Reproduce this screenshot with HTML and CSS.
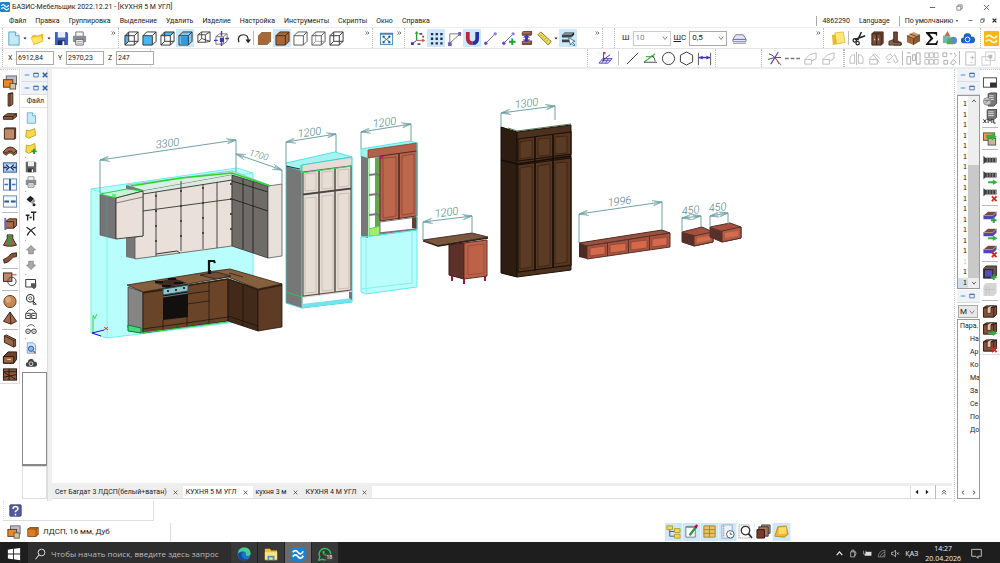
FILE: index.html
```html
<!DOCTYPE html>
<html lang="ru">
<head>
<meta charset="utf-8">
<title>БАЗИС-Мебельщик 2022.12.21 - [КУХНЯ 5 М УГЛ]</title>
<link rel="stylesheet" href="styles.css">
</head>
<body>
<svg class="defs" aria-hidden="true">
<symbol id="logo" viewBox="0 0 16 16"><rect width="16" height="16" rx="2" fill="#1683d8"/><path d="M2 6q3-4 6 0t6-1M2 11q3-4 6 0t6-1" fill="none" stroke="#fff" stroke-width="2"/></symbol>
<symbol id="new" viewBox="0 0 16 16"><path d="M3 1h7l4 4v10H3z" fill="#c4eafa" stroke="#5ba3c2"/><path d="M10 1v4h4" fill="#fff" stroke="#5ba3c2"/></symbol>
<symbol id="open" viewBox="0 0 16 16"><path d="M2 5l4-1 1 1 7-2v8l-10 4z" fill="#e6b923"/><path d="M1 7l11-2 2 6-10 3z" fill="#ffe564" stroke="#dcb32c" stroke-width=".6"/></symbol>
<symbol id="save" viewBox="0 0 16 16"><path d="M1 1h13l1 2v12H1z" fill="#3b62c4"/><path d="M4 1h8v6H4z" fill="#e9eefb"/><path d="M4 10h8v5H4z" fill="#1d2f66"/><path d="M9 11h2v4H9z" fill="#fff"/></symbol>
<symbol id="saveg" viewBox="0 0 16 16"><path d="M1 1h13l1 2v12H1z" fill="#666"/><path d="M4 1h8v6H4z" fill="#eee"/><path d="M4 10h8v5H4z" fill="#333"/><path d="M9 11h2v4H9z" fill="#fff"/></symbol>
<symbol id="print" viewBox="0 0 16 16"><path d="M4 1h8v5H4z" fill="#f5f5f5" stroke="#777"/><rect x="1" y="5" width="14" height="7" rx="1" fill="#888e94"/><path d="M4 9h8v6H4z" fill="#fff" stroke="#666"/><path d="M5 11h6M5 13h6" stroke="#999"/></symbol>
<symbol id="wire" viewBox="0 0 16 16"><path d="M1 5h10v10H1zM5 1h10v10H5zM1 5l4-4M11 5l4-4M1 15l4-4M11 15l4-4" fill="none" stroke="#333"/></symbol>
<symbol id="cleft" viewBox="0 0 16 16"><path d="M1 5l4-4v10l-4 4z" fill="#48b6f2"/><use href="#wire"/></symbol>
<symbol id="cfront" viewBox="0 0 16 16"><path d="M1 5h10v10H1z" fill="#48b6f2"/><path d="M1 5h10v10H1zM5 1h10v10M1 5l4-4M11 5l4-4M11 15l4-4" fill="none" stroke="#333"/></symbol>
<symbol id="ctop" viewBox="0 0 16 16"><path d="M1 5l4-4h10l-4 4z" fill="#48b6f2"/><use href="#wire"/></symbol>
<symbol id="call" viewBox="0 0 16 16"><path d="M1 5l4-4h10v10l-4 4H1z" fill="#79c8f7"/><path d="M3 6h8v8H3z" fill="#2e9be6"/><path d="M1 5h10v10H1zM5 1h10v10M1 5l4-4M11 5l4-4M11 15l4-4" fill="none" stroke="#333"/></symbol>
<symbol id="cpersp" viewBox="0 0 16 16"><path d="M2 4h8v8H2zM6 1h9v10l-5 1M2 4l4-3M10 4l5-3M6 1v7l-4 4M6 8l9 3" fill="none" stroke="#444"/></symbol>
<symbol id="ccen" viewBox="0 0 16 16"><path d="M2 6h8v8H2zM6 3h8v8M2 6l4-3M10 6l4-3M10 14l4-3" fill="none" stroke="#777"/><path d="M8 0v5M8 12v4M0 10h4M12 8h4M7 8h3v3H7z" stroke="#4038b8" fill="#4038b8" stroke-width="1.500"/></symbol>
<symbol id="rot" viewBox="0 0 16 16"><path d="M3 12q-2-8 5-8 5 0 5 6" fill="none" stroke="#222" stroke-width="1.300"/><path d="M10 9h6l-3 4z" fill="#222"/></symbol>
<symbol id="flat" viewBox="0 0 16 16"><path d="M1 5l4-4h10v10l-4 4H1z" fill="#a4693b"/></symbol>
<symbol id="wood" viewBox="0 0 16 16"><path d="M1 5l4-4h10v10l-4 4H1z" fill="#a4693b" stroke="#4a2c14"/><path d="M1 5h10v10M11 5l4-4" fill="none" stroke="#4a2c14"/></symbol>
<symbol id="hollow" viewBox="0 0 16 16"><path d="M1 5l4-4h10v10l-4 4H1zM1 5h10v10M11 5l4-4" fill="#fff" stroke="#555"/></symbol>
<symbol id="hid" viewBox="0 0 16 16"><path d="M5 1v10h10M5 11l-4 4" fill="none" stroke="#aaa"/><path d="M1 5l4-4h10v10l-4 4H1zM1 5h10v10M11 5l4-4" fill="none" stroke="#555"/></symbol>
<symbol id="fit" viewBox="0 0 16 16"><rect x="1.500" y="2.500" width="13" height="12" fill="#edf6fc" stroke="#4b84b4"/><path d="M1 3h14" stroke="#4b84b4" stroke-width="2"/><path d="M4 6l8 6M12 6l-8 6" stroke="#3b74b0"/><path d="M4 6h2M10 6h2M4 12h2M10 12h2" stroke="#234b80" stroke-width="2"/></symbol>
<symbol id="axes" viewBox="0 0 16 16"><path d="M6 10V2" stroke="#2ba33a" stroke-width="1.500"/><path d="M4 3l2-3 2 3z" fill="#2ba33a"/><path d="M6 10l-5 4" stroke="#343fb5"/><path d="M6 10h8" stroke="#d14b3f"/><path d="M0 12h3v3H0z" fill="#343fb5"/><path d="M12 8l3 2-3 2z" fill="#d14b3f"/><path d="M9 3h3M7 14h3M13 5v2" stroke="#555" stroke-width="2"/></symbol>
<symbol id="dots" viewBox="0 0 16 16"><path d="M2 2h2.500v2.500H2zM7 2h2.500v2.500H7zM12 2h2.500v2.500H12zM2 7h2.500v2.500H2zM7 7h2.500v2.500H7zM12 7h2.500v2.500H12zM2 12h2.500v2.500H2zM7 12h2.500v2.500H7zM12 12h2.500v2.500H12z" fill="#22304a"/></symbol>
<symbol id="poly" viewBox="0 0 16 16"><path d="M3 14V3h11L3 13" fill="none" stroke="#777"/><path d="M1 12h4v4H1zM12 1h3v4h-3z" fill="#6b62bd"/></symbol>
<symbol id="mag" viewBox="0 0 16 16"><path d="M8 13q-5 0-5-5V1" fill="none" stroke="#b9253c" stroke-width="4"/><path d="M8 13q5 0 5-5V1" fill="none" stroke="#2530a0" stroke-width="4"/></symbol>
<symbol id="seg" viewBox="0 0 16 16"><path d="M3 13L13 3" stroke="#6a60c4"/><circle cx="3" cy="13" r="1.800" fill="#5b52bc"/><circle cx="13" cy="3" r="1.800" fill="#8c7fe0"/></symbol>
<symbol id="segp" viewBox="0 0 16 16"><use href="#seg"/><path d="M12 8v7M8.500 11.500h7" stroke="#1f9d3b" stroke-width="2"/></symbol>
<symbol id="pipes" viewBox="0 0 16 16"><path d="M3 1l2-1h9v4l-1 1H3zM3 11l2-1h9v4l-1 1H3z" fill="#7a4a39"/><path d="M4 2h8M4 12h8" stroke="#c28a75"/><path d="M8 4l4 3H9.500v2H12l-4 3-4-3h2.500V7H4z" fill="#3a31c2"/></symbol>
<symbol id="ruler" viewBox="0 0 16 16"><path d="M1 4l3-3 11 10-3 4z" fill="#f0d85a" stroke="#8a7a2c"/><path d="M5 4l-1 1M7 6L6 7M9 8L8 9M11 10l-1 1" stroke="#8a7a2c"/></symbol>
<symbol id="pick" viewBox="0 0 16 16"><path d="M1 4l3-3h10l-3 3z" fill="#7c8b91"/><path d="M1 4h10v3H1zM1 9h9v3H1z" fill="#3b454a"/><path d="M11 4l3-3v3l-3 3z" fill="#222"/><path d="M8 7l7 4-3 1 3 3-1 1-3-3-1 2z" fill="#fff" stroke="#4275a2"/></symbol>
<symbol id="stack" viewBox="0 0 16 16"><path d="M4 4h8l3 5H1z" fill="#e4e4f4" stroke="#7477a5"/><path d="M1 9h14v2H1zM1 13h14" fill="none" stroke="#7477a5"/></symbol>
<symbol id="notes" viewBox="0 0 16 16"><path d="M1 4h8l2 9-9 2z" fill="#e5bc2e"/><path d="M4 2l9-1 2 11-9 2z" fill="#ffe873" stroke="#cfab30" stroke-width=".7"/></symbol>
<symbol id="cut" viewBox="0 0 16 16"><path d="M10 1L6 10M3 9l11-4" stroke="#222" stroke-width="1.600"/><circle cx="3" cy="10" r="1.800" fill="none" stroke="#222" stroke-width="1.300"/><circle cx="6" cy="13" r="1.800" fill="none" stroke="#222" stroke-width="1.300"/></symbol>
<symbol id="cab" viewBox="0 0 16 16"><path d="M2 3l2-2h10v12l-2 2H2z" fill="#7a4e38" stroke="#3a2218"/><path d="M2 3h10v12M7 3v12" fill="none" stroke="#3a2218"/><path d="M5 8v2M9 8v2" stroke="#f2d4ae"/></symbol>
<symbol id="corner" viewBox="0 0 16 16"><path d="M6 1h4v9l4 3v2H6z" fill="#6b4a38" stroke="#2c1c14" stroke-width=".8"/><path d="M1 11l5-2v3h8v3H1z" fill="#8d6348" stroke="#2c1c14" stroke-width=".8"/></symbol>
<symbol id="box" viewBox="0 0 16 16"><path d="M1 5l7-4 7 3-7 4z" fill="#cf9a6b"/><path d="M1 5l7 3v7l-7-3z" fill="#a46a3c"/><path d="M8 8l7-4v7l-7 4z" fill="#8a5630"/><path d="M1 5l7 3v7M8 8l7-4M4 3l7 3" fill="none" stroke="#4a2c14" stroke-width=".8"/></symbol>
<symbol id="sum" viewBox="0 0 16 16"><path d="M2 1h12v4h-1q0-2-3-2H6l4 5-5 5h6q2 0 3-3h1l-1 5H2v-1l5-6-5-6z" fill="#111"/></symbol>
<symbol id="shapes" viewBox="0 0 16 16"><path d="M6 0l3 6H2z" fill="#d75b4a"/><rect x="1" y="5" width="8" height="8" fill="#71b7ab"/><circle cx="12" cy="10" r="4" fill="#5d86cc"/><path d="M6 8h4l2 6H5z" fill="#55a957"/></symbol>
<symbol id="cloud" viewBox="0 0 16 16"><path d="M4 13a3 3 0 0 1 0-6 4 4 0 0 1 8-1 3.500 3.500 0 0 1 1 7z" fill="#1b63cc"/><circle cx="8" cy="9" r="2.500" fill="none" stroke="#fff"/></symbol>
<symbol id="yel" viewBox="0 0 16 16"><rect width="16" height="16" rx="1" fill="#f7b719"/><path d="M2 7q3-4 6-1t6-1M2 11q3-3 6 0t6-1" fill="none" stroke="#fff4cc" stroke-width="1.800"/></symbol>
<symbol id="plane" viewBox="0 0 16 16"><path d="M1 13l4-5h10l-4 5zM4 10h10M7 8l-3 5M11 8l-3 5" fill="#e5e0ff" stroke="#6153b5"/><path d="M6 11V1M6 9l7-5" stroke="#3b3190"/><path d="M5 1h3v3z" fill="#c33"/></symbol>
<symbol id="line" viewBox="0 0 16 16"><path d="M2 14L14 2" stroke="#333"/></symbol>
<symbol id="ang" viewBox="0 0 16 16"><path d="M1 12L13 3M3 6h9" stroke="#4eae4e" stroke-width="1.200"/><path d="M1 12h14M9 5q4 2 4 6" fill="none" stroke="#444"/></symbol>
<symbol id="circ" viewBox="0 0 16 16"><circle cx="8" cy="8" r="6.500" fill="none" stroke="#333"/></symbol>
<symbol id="hex" viewBox="0 0 16 16"><path d="M8 1l6.500 3.500v7L8 15l-6.500-3.500v-7z" fill="none" stroke="#333"/></symbol>
<symbol id="dim" viewBox="0 0 16 16"><path d="M1.500 2v13M14.500 2v13" stroke="#555"/><path d="M2 7h12" stroke="#3c33c4" stroke-width="1.500"/><path d="M2 7l4-2v4zM14 7l-4-2v4z" fill="#3c33c4"/></symbol>
<symbol id="trim" viewBox="0 0 16 16"><path d="M1 9q7-3 14-2M2 3q7 2 11 11" fill="none" stroke="#444"/><path d="M12 1L4 14" stroke="#4b41c7" stroke-width="1.200"/><path d="M9 8l6 7" stroke="#d54747"/></symbol>
<symbol id="dash" viewBox="0 0 16 16"><path d="M0 8h4M6 8h4M12 8h4" stroke="#777" stroke-width="1.500"/></symbol>
<symbol id="ext" viewBox="0 0 16 16"><path d="M2 9h7v5H2zM7 4l7-2v6l-5 3M2 9l5-5" fill="none" stroke="#bbb"/></symbol>
<symbol id="mir" viewBox="0 0 16 16"><path d="M8 1v14M6 4q-5 0-5 5v4h5zM10 4q5 0 5 5v4h-5z" fill="none" stroke="#bbb"/></symbol>
<symbol id="roof" viewBox="0 0 16 16"><path d="M2 9l6-6 6 5M3 9h8v5H3zM6 3l7 9" fill="none" stroke="#bbb"/></symbol>
<symbol id="tilt" viewBox="0 0 16 16"><path d="M1 7l4-4 3 3-4 4zM8 6q3-4 4 1M11 6l3 5-3 2-2-4M2 12h4" fill="none" stroke="#bbb"/></symbol>
<symbol id="arr" viewBox="0 0 16 16"><path d="M1 6h4v8H1zM7 4h3v6H7zM11 2h4v12h-4zM1 2h4" fill="none" stroke="#aaa"/></symbol>
<symbol id="cop" viewBox="0 0 16 16"><path d="M1 2h4v4H1zM2 10h4v4H2zM8 3h3M13 2l2 3-2 2M9 13l3-4 3 3-3 3z" fill="none" stroke="#aaa"/></symbol>
<symbol id="six" viewBox="0 0 16 16"><path d="M1 2h4v5H1zM6 2h4v5H6zM11 2h4v5h-4zM1 9h4v5H1zM6 9h4v5H6zM11 9h4v5h-4z" fill="none" stroke="#bbb"/></symbol>
<symbol id="doc2" viewBox="0 0 16 16"><path d="M3 1h10v14H3zM8 7h4M10 5v4M8 12h2" fill="none" stroke="#bbb"/></symbol>
<symbol id="doc3" viewBox="0 0 16 16"><path d="M5 1h10v9H5zM1 6h9v9H1z" fill="none" stroke="#ccc"/><path d="M8 4h4v4H8z" fill="#bbb"/></symbol>
<symbol id="mat" viewBox="0 0 16 16"><rect x="4" y="1" width="11" height="9" fill="#b9bed3" stroke="#666"/><rect x="1" y="5" width="10" height="8" fill="#ec8727" stroke="#59361c"/><rect x="8" y="9" width="6" height="6" fill="#d5c398" stroke="#555"/></symbol>
<symbol id="vert" viewBox="0 0 16 16"><path d="M6 2l3-1h2v12l-3 2H6z" fill="#9c6446" stroke="#3a2218"/><path d="M6 2h2v13M8 2l3-1" fill="none" stroke="#3a2218"/></symbol>
<symbol id="horz" viewBox="0 0 16 16"><path d="M1 8l4-3h10v3l-4 3H1z" fill="#8f5b40" stroke="#3a2218"/><path d="M1 8h10v3M11 8l4-3" fill="none" stroke="#3a2218"/></symbol>
<symbol id="panel" viewBox="0 0 16 16"><path d="M2 3l1-1h11v11l-1 1H2z" fill="#bf8b6d" stroke="#3a2218"/><path d="M2 3h11v11" fill="none" stroke="#3a2218"/></symbol>
<symbol id="arc" viewBox="0 0 16 16"><path d="M1 9q7-9 14-1v3l-3 2q-4-5-8 0l-3-2z" fill="#a16a4c" stroke="#3a2218"/><path d="M1 9l3 2q4-5 8 0l3-3" fill="none" stroke="#3a2218"/></symbol>
<symbol id="hx" viewBox="0 0 16 16"><rect x="1" y="3" width="14" height="10" fill="#9ec3ee" stroke="#3d5f94"/><rect x="3" y="5" width="10" height="6" fill="#dbe9f9"/><path d="M1 8h4M11 8h4M4 5l3 3-3 3M12 5L9 8l3 3" fill="none" stroke="#1c3c70" stroke-width="1.500"/></symbol>
<symbol id="hv" viewBox="0 0 16 16"><rect x="1" y="2" width="14" height="12" fill="#f2f7fc" stroke="#6388b3"/><path d="M8 2v12" stroke="#2856a0" stroke-width="2"/><path d="M2 8h4M10 8h4" stroke="#3977c5" stroke-width="1.500"/></symbol>
<symbol id="hh" viewBox="0 0 16 16"><rect x="1" y="2" width="14" height="12" fill="#f2f7fc" stroke="#6388b3"/><path d="M2 8h5M9 8h5" stroke="#2856a0" stroke-width="2"/></symbol>
<symbol id="edge" viewBox="0 0 16 16"><path d="M3 6l4-3h8v7l-3 3H3z" fill="#a86d4b" stroke="#3a2218"/><path d="M3 6h9v7" fill="none" stroke="#3a2218"/><path d="M3 2v13" stroke="#5d6cc9" stroke-width="2"/></symbol>
<symbol id="bell" viewBox="0 0 16 16"><path d="M5 2h6v4l4 7-5 1H5l-4-1 4-7z" fill="#9c6446" stroke="#3a2218"/><path d="M6 2h4v10l-2 2-2-2z" fill="#4d8c45"/></symbol>
<symbol id="wave" viewBox="0 0 16 16"><path d="M1 10q4-1 6-4t8-3v4q-4 0-6 3t-7 4z" fill="#885337" stroke="#3a2218"/></symbol>
<symbol id="sc" viewBox="0 0 16 16"><rect x="1" y="1" width="9" height="9" fill="#bc8b6e" stroke="#3a2218"/><circle cx="10" cy="10" r="4.500" fill="none" stroke="#444"/><path d="M10 3h5" stroke="#d23"/></symbol>
<symbol id="ball" viewBox="0 0 16 16"><circle cx="8" cy="8" r="6.500" fill="#c48755" stroke="#5c3a24"/><circle cx="6" cy="6" r="3" fill="#dba877"/></symbol>
<symbol id="pyr" viewBox="0 0 16 16"><path d="M8 1l7 10-6 3-8-3z" fill="#a3694a" stroke="#3a2218"/><path d="M8 1l1 13" stroke="#3a2218"/></symbol>
<symbol id="door" viewBox="0 0 16 16"><path d="M2 3l2-1 10 5v7l-2 1L2 10z" fill="#98674a" stroke="#3a2218"/><path d="M2 3l10 5v7M12 8l2-1" fill="none" stroke="#3a2218"/></symbol>
<symbol id="drawer" viewBox="0 0 16 16"><path d="M1 7l5-5h9v8l-3 4H1z" fill="#6e422c" stroke="#2a1810"/><path d="M1 7h11v7H1z" fill="#9b6647" stroke="#2a1810"/><path d="M5 10h4" stroke="#f6ddbb"/></symbol>
<symbol id="frame" viewBox="0 0 16 16"><rect x="1" y="2" width="14" height="12" fill="#8d583d" stroke="#2a1810"/><path d="M1 5h14M1 11l14-3M7 2v12M2 6l12 7" stroke="#2a1810"/></symbol>
<symbol id="fold" viewBox="0 0 16 16"><path d="M2 4l4 1 7-3 1 9-9 4-4-2z" fill="#f8da41" stroke="#b39121"/></symbol>
<symbol id="foldp" viewBox="0 0 16 16"><use href="#fold"/><path d="M12 9v7M8.500 12.500h7" stroke="#219b35" stroke-width="2.400"/></symbol>
<symbol id="erase" viewBox="0 0 16 16"><path d="M2 6l5-5 5 4-5 5z" fill="#222"/><path d="M7 10l5-5 2 3-4 4z" fill="#999"/><circle cx="12" cy="13" r="2" fill="#222"/></symbol>
<symbol id="text" viewBox="0 0 16 16"><path d="M1 7h5M3.500 7v7M8 3h7M11.500 3v11M6 10h3" stroke="#222" stroke-width="1.800"/></symbol>
<symbol id="del" viewBox="0 0 16 16"><path d="M2 3q6 3 12 11M14 3Q6 7 3 14" fill="none" stroke="#222" stroke-width="1.600"/></symbol>
<symbol id="up" viewBox="0 0 16 16"><path d="M8 2l6 6h-3v5H5V8H2z" fill="#aaa" stroke="#777"/></symbol>
<symbol id="down" viewBox="0 0 16 16"><path d="M8 14l6-6h-3V3H5v5H2z" fill="#aaa" stroke="#777"/></symbol>
<symbol id="zr" viewBox="0 0 16 16"><path d="M1 2h13v10H1z" fill="none" stroke="#333" stroke-width="1.300"/><path d="M8 7h7v5l-3 3-4-4z" fill="#555"/></symbol>
<symbol id="zo" viewBox="0 0 16 16"><circle cx="7" cy="7" r="5" fill="none" stroke="#333" stroke-width="1.500"/><circle cx="7" cy="7" r="2" fill="none" stroke="#333"/><path d="M11 10v5M11 15h4M11 11l4 4" stroke="#333" stroke-width="1.300"/></symbol>
<symbol id="two" viewBox="0 0 16 16"><path d="M2 6q6-8 12 0M1 7h6v7H1zM9 7h6v7H9zM3 10h3M10 10h3" fill="none" stroke="#333" stroke-width="1.300"/></symbol>
<symbol id="gla" viewBox="0 0 16 16"><path d="M3 5q5-6 10 0" fill="none" stroke="#333"/><circle cx="4" cy="11" r="3" fill="none" stroke="#333" stroke-width="1.300"/><circle cx="12" cy="11" r="3" fill="none" stroke="#333" stroke-width="1.300"/><path d="M3 11h2M11 11h2M7 10h2" stroke="#333"/></symbol>
<symbol id="find" viewBox="0 0 16 16"><path d="M3 1h8l3 3v11H3z" fill="#cfe3fa" stroke="#6b94cb"/><circle cx="8" cy="9" r="3.500" fill="#8ab8ee" stroke="#2f60a8" stroke-width="1.300"/><path d="M11 12l3 3" stroke="#c55" stroke-width="2"/></symbol>
<symbol id="cg" viewBox="0 0 16 16"><path d="M4 13a3 3 0 0 1 0-6 4 4 0 0 1 8-1 3.500 3.500 0 0 1 1 7z" fill="#444"/><circle cx="8" cy="9" r="2.500" fill="none" stroke="#fff"/></symbol>
<symbol id="sheet" viewBox="0 0 16 16"><rect x="1" y="3" width="14" height="10" fill="#fff" stroke="#444"/><path d="M8 8h7v5H8z" fill="#333"/></symbol>
<symbol id="srv" viewBox="0 0 16 16"><path d="M6 2l3-1h6v11l-3 3H6z" fill="#777" stroke="#444"/><path d="M7 4h5M7 6h5M7 8h5" stroke="#ddd"/><circle cx="5" cy="10" r="4" fill="#c5cbd0" stroke="#888"/><path d="M2 9h6M3 12l4-4" stroke="#777"/></symbol>
<symbol id="xml" viewBox="0 0 16 16"><path d="M5 1l3-1h7v9l-3 2H5z" fill="#777" stroke="#444"/><path d="M6 3h6M6 5h6M6 7h6" stroke="#ddd"/><path d="M1 11l3 4M4 11l-3 4M6 15v-4l2 2 2-2v4M12 11v4h2" fill="none" stroke="#222"/></symbol>
<symbol id="ga" viewBox="0 0 16 16"><rect x="1" y="2" width="12" height="8" fill="#ec9d4c" stroke="#555"/><rect x="6" y="8" width="8" height="7" fill="#c8b592" stroke="#555"/><path d="M4 4h6V2l5 4-5 4V8H4z" fill="#2fb43f"/></symbol>
<symbol id="screw" viewBox="0 0 16 16"><path d="M1 3l2 2h12v5H3l-2 2z" fill="#3c3c3c"/><path d="M5 4v7M8 4v7M11 4v7M14 4v7" stroke="#aaa" stroke-width=".8"/></symbol>
<symbol id="ar" viewBox="0 0 16 16"><path d="M6 12h5v-2l5 3-5 3v-2H6z" fill="#2fb43f"/></symbol>
<symbol id="rx" viewBox="0 0 16 16"><path d="M10 10l5 5M15 10l-5 5" stroke="#d22a2a" stroke-width="2"/></symbol>
<symbol id="screwa" viewBox="0 0 16 16"><use href="#screw" y="-2"/><use href="#ar"/></symbol>
<symbol id="screwx" viewBox="0 0 16 16"><use href="#screw" y="-2"/><use href="#rx"/></symbol>
<symbol id="lay" viewBox="0 0 16 16"><path d="M1 7l5-4h9l-4 4z" fill="#6c5145"/><path d="M1 7h10l4-4v4l-4 4H1z" fill="#4b45b9"/><path d="M1 7h10l4-4" fill="none" stroke="#c98d6f"/></symbol>
<symbol id="layp" viewBox="0 0 16 16"><use href="#lay"/><path d="M12 9v6M9 12h6" stroke="#2fa43f" stroke-width="2"/></symbol>
<symbol id="laya" viewBox="0 0 16 16"><use href="#lay"/><use href="#ar"/></symbol>
<symbol id="layx" viewBox="0 0 16 16"><use href="#lay"/><use href="#rx"/></symbol>
<symbol id="blk" viewBox="0 0 16 16"><path d="M1 4l3-3h11v10l-3 3H1z" fill="#6c5145" stroke="#333"/><path d="M2 5h9v8H2z" fill="#544cc8" stroke="#222"/><path d="M12 10v6M9 13h6" stroke="#2fa43f" stroke-width="2"/></symbol>
<symbol id="gr" viewBox="0 0 16 16"><path d="M1 4l3-3h11v11l-3 3H1z" fill="#d5d5d5"/><path d="M4 5v8M7 5v8M1 8h12" stroke="#c2c2c2"/></symbol>
<symbol id="slot" viewBox="0 0 16 16"><path d="M1 4l3-2h11v9l-3 3H1z" fill="#81513c" stroke="#2a1810"/><path d="M5 4l3-2h4L9 4v6H5z" fill="#e2c4ad" stroke="#2a1810" stroke-width=".7"/><path d="M1 4h4M9 4h3v10M12 4l3-2" fill="none" stroke="#2a1810"/></symbol>
<symbol id="slota" viewBox="0 0 16 16"><use href="#slot"/><use href="#ar"/></symbol>
<symbol id="slotx" viewBox="0 0 16 16"><use href="#slot"/><use href="#rx"/></symbol>
<symbol id="oak" viewBox="0 0 16 16"><path d="M1 4l3-2h11v9l-3 3H1z" fill="#e07d23" stroke="#6e3a11"/><path d="M1 4h11v10M12 4l3-2" fill="none" stroke="#6e3a11"/></symbol>
<symbol id="tree" viewBox="0 0 16 16"><path d="M4 5v8h6M4 8h6" fill="none" stroke="#555"/><path d="M1 2h6v4H1zM9 5h6v4H9zM9 11h6v4H9z" fill="#f6da4b" stroke="#b89722"/></symbol>
<symbol id="edit" viewBox="0 0 16 16"><path d="M2 3h10v11H2z" fill="#fff" stroke="#777"/><path d="M2 3h10" stroke="#888" stroke-width="2"/><path d="M6 12l7-9" stroke="#369640" stroke-width="2.500"/><path d="M12 4l2-3" stroke="#c04" stroke-width="2.500"/></symbol>
<symbol id="cells" viewBox="0 0 16 16"><path d="M2 2h12v12H2z" fill="#e9c560" stroke="#a98232"/><path d="M2 6h12M2 10h12M8 2v12" stroke="#a98232"/></symbol>
<symbol id="clock" viewBox="0 0 16 16"><path d="M2 1h11v14H2z" fill="#eef4fb" stroke="#9ab"/><path d="M4 2v12" stroke="#567" stroke-dasharray="1 1"/><circle cx="11" cy="11" r="4" fill="#fff" stroke="#456"/><path d="M11 9v2h2" fill="none" stroke="#456"/></symbol>
<symbol id="look" viewBox="0 0 16 16"><path d="M1 1h11v14H1z" fill="#f8f8f8" stroke="#888" stroke-dasharray="1 1"/><circle cx="8" cy="7" r="4.500" fill="#fff" stroke="#333" stroke-width="1.400"/><path d="M11 10l4 5" stroke="#333" stroke-width="1.800"/></symbol>
<symbol id="sets" viewBox="0 0 16 16"><path d="M6 1h9v9H6z" fill="#9b9080" stroke="#444"/><path d="M3 3h10v10H3z" fill="#ae7557" stroke="#333"/><path d="M1 6h8v9H1z" fill="#743c2b" stroke="#311"/></symbol>
<symbol id="gold" viewBox="0 0 16 16"><path d="M4 3l9-1 2 9-4 3-10-1z" fill="#f0b72d" stroke="#c68b14"/><path d="M5 4l8-1v7l-8 1z" fill="#ffda67"/></symbol>
<symbol id="ques" viewBox="0 0 16 16"><rect x="1" y="1" width="14" height="14" rx="1" fill="#555a9c" stroke="#373b70"/><path d="M5 6q0-3 3-3t3 3q0 1-3 3v1M8 12v2" fill="none" stroke="#fff" stroke-width="1.800"/></symbol>
<symbol id="win" viewBox="0 0 16 16"><path d="M1 3l6-1v5.500H1zM8 2l7-1v6.500H8zM1 8.500h6V14l-6-1zM8 8.500h7V15l-7-1z" fill="#fff"/></symbol>
<symbol id="mgl" viewBox="0 0 16 16"><circle cx="10" cy="6" r="4.500" fill="none" stroke="#ddd" stroke-width="1.300"/><path d="M7 9l-5 6" stroke="#ddd" stroke-width="1.400"/></symbol>
<symbol id="edgeb" viewBox="0 0 16 16"><circle cx="8" cy="8" r="7.500" fill="#1c74c9"/><path d="M1 7q1-6.500 7.500-6.500T15.500 7q0 3-3.500 3-2 0-2-1 1-1 0-3-4-3-9 1z" fill="#46cf8e"/><path d="M5 8q0 6 7 6-3 2.500-7 1-4-2-4-7 3-3 7-2-3 0-3 2z" fill="#144a9e"/></symbol>
<symbol id="expl" viewBox="0 0 16 16"><path d="M1 2h6l1 2h7v11H1z" fill="#f2be3a"/><path d="M1 6h14v8H1z" fill="#fde388"/><path d="M4 10h8v5h-2v-3H6v3H4z" fill="#3f93d3"/></symbol>
<symbol id="wa" viewBox="0 0 16 16"><path d="M1 15l1-4A6.500 6.500 0 1 1 5 14z" fill="none" stroke="#2fc060" stroke-width="1.600"/><path d="M5 5q0 4 5 6l1-2-2-1-1 1-1-2 1-1-1-2z" fill="#2fc060"/></symbol>
<symbol id="t1" viewBox="0 0 16 16"><path d="M3 5h7v9H3zM5 5V2h4v3M11 4q3 3 0 8" fill="none" stroke="#ddd" stroke-width="1.200"/></symbol>
<symbol id="t2" viewBox="0 0 16 16"><path d="M3 5h12v7H3z" fill="#ddd"/><path d="M1 3v6h4V3" fill="#222" stroke="#ddd"/></symbol>
<symbol id="t3" viewBox="0 0 16 16"><path d="M2 14Q3 3 14 2v12zM6 14q0-6 8-8M10 14q0-3 4-4" fill="none" stroke="#999" stroke-width="1.200"/></symbol>
<symbol id="t4" viewBox="0 0 16 16"><path d="M1 6h3l4-4v12l-4-4H1zM10 6l4 4M14 6l-4 4" fill="none" stroke="#ddd" stroke-width="1.200"/></symbol>
<symbol id="t5" viewBox="0 0 16 16"><path d="M1 2h14v10h-5v3l-3-3H1z" fill="none" stroke="#ddd" stroke-width="1.200"/></symbol>
<symbol id="min" viewBox="0 0 16 16"><path d="M2 8h12" stroke="currentColor" stroke-width="2"/></symbol>
<symbol id="max" viewBox="0 0 16 16"><path d="M2 3h12v10H2zM2 4h12" fill="none" stroke="currentColor" stroke-width="2"/></symbol>
<symbol id="res" viewBox="0 0 16 16"><path d="M2 5h9v9H2zM5 5V2h9v9h-3" fill="none" stroke="currentColor" stroke-width="1.500"/></symbol>
<symbol id="x" viewBox="0 0 16 16"><path d="M2 2l12 12M14 2L2 14" stroke="currentColor" stroke-width="2"/></symbol>
<symbol id="xb" viewBox="0 0 16 16"><path d="M2 2l12 12M14 2L2 14" stroke="currentColor" stroke-width="4"/></symbol>
<symbol id="chd" viewBox="0 0 16 16"><path d="M3 5l5 6 5-6" fill="none" stroke="currentColor" stroke-width="2"/></symbol>
<symbol id="chu" viewBox="0 0 16 16"><path d="M3 11l5-6 5 6" fill="none" stroke="currentColor" stroke-width="2"/></symbol>
<symbol id="chl" viewBox="0 0 16 16"><path d="M11 3L5 8l6 5" fill="none" stroke="currentColor" stroke-width="2"/></symbol>
<symbol id="chr" viewBox="0 0 16 16"><path d="M5 3l6 5-6 5" fill="none" stroke="currentColor" stroke-width="2"/></symbol>
<symbol id="tl" viewBox="0 0 16 16"><path d="M11 2v12L4 8z" fill="#111"/></symbol>
<symbol id="tr" viewBox="0 0 16 16"><path d="M5 2v12l7-6z" fill="#111"/></symbol>
<symbol id="dbu" viewBox="0 0 16 16"><path d="M3 8l5-5 5 5M3 14l5-5 5 5" fill="none" stroke="#222" stroke-width="2"/></symbol>
<symbol id="td" viewBox="0 0 16 16"><path d="M3 5h10l-5 6z" fill="#222"/></symbol>
<symbol id="more" viewBox="0 0 16 16"><path d="M2 3l5 5-5 5M8 3l5 5-5 5" fill="none" stroke="#222" stroke-width="2"/></symbol>
</svg>

<div class="app">
<header class="title">
  <svg class="i9"><use href="#logo"/></svg><h1>БАЗИС-Мебельщик 2022.12.21 - [КУХНЯ 5 М УГЛ]</h1>
  <div class="winbtns"><button aria-label="Свернуть"><svg class="i7"><use href="#min"/></svg></button><button aria-label="Восстановить"><svg class="i7"><use href="#res"/></svg></button><button aria-label="Закрыть"><svg class="i7"><use href="#x"/></svg></button></div>
</header>
<nav class="menu">
  <button>Файл</button><button>Правка</button><button>Группировка</button><button>Выделение</button><button>Удалить</button><button>Изделие</button><button>Настройка</button><button>Инструменты</button><button>Скрипты</button><button>Окно</button><button>Справка</button>
  <div class="menuright"><span class="bar">4862290</span><button>Language</button><button class="bar">По умолчанию <svg class="i5"><use href="#td"/></svg></button><button class="mdi" aria-label="Свернуть окно"><svg class="i6"><use href="#min"/></svg></button><button class="mdi" aria-label="Восстановить окно"><svg class="i6"><use href="#res"/></svg></button><button class="mdi" aria-label="Закрыть окно"><svg class="i6"><use href="#xb"/></svg></button></div>
</nav>

<div class="tools">
  <div class="g g1"><button aria-label="Новый"><svg><use href="#new"/></svg></button><svg class="caret"><use href="#td"/></svg><button aria-label="Открыть"><svg><use href="#open"/></svg></button><svg class="caret"><use href="#td"/></svg><button aria-label="Сохранить"><svg><use href="#save"/></svg></button><button aria-label="Печать"><svg><use href="#print"/></svg></button><svg class="more"><use href="#more"/></svg></div>
  <div class="g g2"><button aria-label="Слева"><svg><use href="#cleft"/></svg></button><button aria-label="Спереди"><svg><use href="#cfront"/></svg></button><button aria-label="Сверху"><svg><use href="#ctop"/></svg></button><button class="on" aria-label="Аксонометрия"><svg><use href="#call"/></svg></button><button aria-label="Перспектива"><svg><use href="#cpersp"/></svg></button><button aria-label="Центр"><svg><use href="#ccen"/></svg></button><i class="gap"></i><button aria-label="Повернуть"><svg><use href="#rot"/></svg></button><i class="sep"></i><button aria-label="Заливка"><svg><use href="#flat"/></svg></button><button class="on" aria-label="Текстура"><svg><use href="#wood"/></svg></button><button aria-label="Без линий"><svg><use href="#hollow"/></svg></button><button aria-label="Невидимые"><svg><use href="#hid"/></svg></button><button aria-label="Каркас"><svg><use href="#wire"/></svg></button><svg class="more"><use href="#more"/></svg></div>
  <div class="g g3"><button aria-label="Показать всё"><svg><use href="#fit"/></svg></button><svg class="more"><use href="#more"/></svg></div>
  <div class="g g4"><button aria-label="Оси"><svg><use href="#axes"/></svg></button><button class="on" aria-label="Сетка"><svg><use href="#dots"/></svg></button><button aria-label="Полилиния"><svg><use href="#poly"/></svg></button><button class="on" aria-label="Привязка"><svg><use href="#mag"/></svg></button><button aria-label="Отрезок"><svg><use href="#seg"/></svg></button><button aria-label="Добавить точку"><svg><use href="#segp"/></svg></button><button aria-label="Расстояние"><svg><use href="#pipes"/></svg></button><button aria-label="Линейка"><svg><use href="#ruler"/></svg></button><svg class="caret"><use href="#td"/></svg><button class="on" aria-label="Выбор"><svg><use href="#pick"/></svg></button><svg class="more"><use href="#more"/></svg></div>
  <div class="g g5"></div>
  <div class="g g6"><label for="w">Ш</label><select id="w" disabled><option>10</option></select><label for="ws"><u>Ш</u>С</label><select id="ws"><option>0,5</option></select><button aria-label="Слои"><svg><use href="#stack"/></svg></button><svg class="more"><use href="#more"/></svg></div>
  <div class="g g7"><button aria-label="Заметки"><svg><use href="#notes"/></svg></button><i class="sep"></i><button aria-label="Раскрой"><svg><use href="#cut"/></svg></button><button aria-label="Шкаф"><svg><use href="#cab"/></svg></button><button aria-label="Уголок"><svg><use href="#corner"/></svg></button><button aria-label="Упаковка"><svg><use href="#box"/></svg></button><button aria-label="Смета"><svg><use href="#sum"/></svg></button><button aria-label="Фигуры"><svg><use href="#shapes"/></svg></button><button aria-label="Облако"><svg><use href="#cloud"/></svg></button></div>
  <div class="g"><button aria-label="Базис"><svg><use href="#yel"/></svg></button></div>
</div>
<div class="tools second">
  <div class="g coords"><label for="cx">X</label><input id="cx" value="6912,84"><label for="cy">Y</label><input id="cy" value="2970,23"><label for="cz">Z</label><input id="cz" value="247"></div>
  <div class="g h1"></div>
  <div class="g h2"><button aria-label="Плоскость"><svg><use href="#plane"/></svg></button><i class="sep"></i><button aria-label="Линия"><svg><use href="#line"/></svg></button><button aria-label="Угол"><svg><use href="#ang"/></svg></button><button aria-label="Окружность"><svg><use href="#circ"/></svg></button><button aria-label="Многоугольник"><svg><use href="#hex"/></svg></button><button aria-label="Размер"><svg><use href="#dim"/></svg></button></div>
  <div class="g h3"></div>
  <div class="g h4"><button aria-label="Обрезать"><svg><use href="#trim"/></svg></button><button aria-label="Пунктир"><svg><use href="#dash"/></svg></button><button aria-label="Вытянуть"><svg><use href="#ext"/></svg></button><button aria-label="Сдвинуть"><svg><use href="#ext"/></svg></button></div>
  <div class="g h5"><button aria-label="Симметрия"><svg><use href="#mir"/></svg></button><button aria-label="Поворот"><svg><use href="#roof"/></svg></button><button aria-label="Наклон"><svg><use href="#tilt"/></svg></button><i class="sep"></i><button aria-label="Выровнять"><svg><use href="#arr"/></svg></button><button aria-label="Массив"><svg><use href="#six"/></svg></button><button aria-label="Копии"><svg><use href="#cop"/></svg></button><i class="sep"></i><button aria-label="Лист"><svg><use href="#doc2"/></svg></button><button aria-label="Листы"><svg><use href="#doc3"/></svg></button></div>
</div>

<main class="main">
  <div class="vt"><svg><use href="#mat"/></svg><svg><use href="#vert"/></svg><svg><use href="#horz"/></svg><svg><use href="#panel"/></svg><svg><use href="#arc"/></svg><svg><use href="#hx"/></svg><svg><use href="#hv"/></svg><svg><use href="#hh"/></svg><hr><svg><use href="#edge"/></svg><svg><use href="#bell"/></svg><svg><use href="#wave"/></svg><hr><svg><use href="#sc"/></svg><hr><svg><use href="#ball"/></svg><svg><use href="#pyr"/></svg><hr><svg><use href="#door"/></svg><svg><use href="#drawer"/></svg><svg><use href="#frame"/></svg></div>
  <aside class="lp">
    <div class="cap"><svg><use href="#min"/></svg><svg><use href="#max"/></svg><svg><use href="#xb"/></svg></div>
    <div class="cap"><svg><use href="#min"/></svg><svg><use href="#max"/></svg><svg><use href="#xb"/></svg></div>
    <button class="file">Файл</button>
    <div class="fi"><svg><use href="#new"/></svg><svg><use href="#fold"/></svg><svg><use href="#foldp"/></svg><hr><svg><use href="#saveg"/></svg><svg><use href="#print"/></svg><hr><svg><use href="#erase"/></svg><svg><use href="#text"/></svg><svg><use href="#del"/></svg><hr><svg><use href="#up"/></svg><svg><use href="#down"/></svg><hr><svg><use href="#zr"/></svg><svg><use href="#zo"/></svg><svg><use href="#two"/></svg><svg><use href="#gla"/></svg><hr><svg><use href="#find"/></svg><svg><use href="#cg"/></svg></div>
    <div class="preview"></div><div class="under"></div>
  </aside>
  <section class="work">
    <svg class="scene" viewBox="52 69 900 414" preserveAspectRatio="xMinYMin meet" role="img" aria-label="Модель кухни">
      <defs><marker id="a" viewBox="0 0 10 6" markerWidth="10" markerHeight="6" refX="10" refY="3" orient="auto-start-reverse" markerUnits="userSpaceOnUse"><path d="M0 0l10 3-10 3M2 1.500l8 1.500-8 1.500" fill="none" stroke="#6fa3a6" stroke-width=".7"/></marker></defs>
      <path d="M91 189l146-21 16 5v147l-146 18-16-5z" fill="#b9fdfd" stroke="#73eeee"/>
      <path d="M107 194v144M91 189l16 5 146-21" fill="none" stroke="#84f0f0"/>
      <path d="M127 185l105-14 37 14-37-8-89 14z" fill="#d8efe6" stroke="#8cc"/>
      <path d="M126 185l17 5v49l-8-2v22l-9-2z" fill="#777"/>
      <path d="M143 191l89-16v71l-97 13v-22l8-1z" fill="#e8e0d9" stroke="#555" stroke-width=".8"/>
      <path d="M143 191l89-16v5l-89 14z" fill="#dce9df"/>
      <path d="M143 194l89-14M143 211l89-12M156 192v64M181 181v70M203 184v65M217 182v66" fill="none" stroke="#333" stroke-width=".9"/>
      <path d="M156 195v60M181 190v60M203 187v60M231 183v60" stroke="#333" stroke-width="1.600" stroke-dasharray="2 13"/>
      <path d="M156 254l21-3 3 2" stroke="#333" fill="none"/>
      <path d="M100 194l16 4v41l-16-4z" fill="#757575" stroke="#444" stroke-width=".6"/><path d="M107 195v42" stroke="#599" stroke-width=".7"/>
      <path d="M100 194l27-5 16 2-27 7z" fill="#c7f3d4" stroke="#3c5"/><path d="M113 194v4M115 194v4" stroke="#1d3"/>
      <path d="M116 198l27-7v45l-27 3z" fill="#e8e0d9" stroke="#333" stroke-width=".9"/><path d="M116 203l27-6" stroke="#555" stroke-width=".7"/>
      <path d="M232 175l36 11v72l-36-12z" fill="#6f6b67" stroke="#333" stroke-width=".8"/>
      <path d="M232 181l36 11M232 199l36 12M243 179v70M253 182v71" stroke="#222" stroke-width=".9"/>
      <path d="M268 186l14-2v72l-14 2z" fill="#e8e0d9" stroke="#444" stroke-width=".7"/>
      <path d="M131 186l50-8 51-5 38 13" fill="none" stroke="#2bd52b" stroke-width="1.600"/>
      <path d="M128 287l15 5v41l-15-5z" fill="#858585" stroke="#333" stroke-width=".7"/>
      <path d="M143 292l85-13v42l-85 12z" fill="#694429" stroke="#24150c" stroke-width=".8"/>
      <path d="M228 279l30 10v42l-30-10z" fill="#422a1a" stroke="#1a0f08" stroke-width=".8"/><path d="M243 284v42M228 316l30 10" stroke="#1a0f08" stroke-width=".7"/>
      <path d="M258 289l24-5v43l-24 4z" fill="#5e3b24" stroke="#24150c" stroke-width=".8"/>
      <path d="M143 329l85-12M187 288v38M209 283v40M187 294l22-3M187 304l22-3M163 320v10" stroke="#24150c" stroke-width=".8"/>
      <path d="M127 285l80-13 23-3 52 15-24 5-30-12-85 15z" fill="#85603f" stroke="#37200f" stroke-width=".8"/><path d="M143 293l85-14 30 11 24-5" fill="none" stroke="#33200f" stroke-width="1.300"/>
      <path d="M200 275l16-3 15 4-15 3zM229 273l14 4" fill="#73503a" stroke="#25160d" stroke-width=".7"/>
      <path d="M154 283l19-5 14 5-19 4z" fill="#422a22"/><path d="M155 282h8M168 279h8M162 286h9M174 283h9" stroke="#111" stroke-width="2"/>
      <path d="M163 288l25-4v33l-25 3z" fill="#11100f"/><path d="M163 289l25-4v6l-25 4z" fill="#8fc4cb" stroke="#256"/><path d="M167 291h2M175 290h2M183 288h2" stroke="#333" stroke-width="2"/><path d="M163 297l25-4" stroke="#777"/>
      <path d="M209 274v-13h5l1 2M210 274v-4" fill="none" stroke="#111" stroke-width="2.200"/>
      <path d="M128 325l13 3v5l-13-2z" fill="#46d87b" stroke="#087d38"/><path d="M141 333l87-11" fill="none" stroke="#32d55d"/>
      <path d="M93 333v-17" stroke="#3bd43b"/><path d="M92 333l12-3M92 333l9 3" stroke="#21c"/><path d="M104 327l4 3M108 327l-4 3" stroke="#e33"/><path d="M93 315l2 4M97 314l-2 4" stroke="#3bd43b"/>
      <path d="M286 163l49-11 17 5-50 8v6l-16-5z" fill="#a6f4f1" stroke="#52e4e4"/>
      <path d="M286 166l16 5v137l-16-5z" fill="#777" stroke="#3bc7c7" stroke-width=".8"/><path d="M286 292l16 5" stroke="#2c4"/><path d="M286 166l14 3" stroke="#333"/>
      <path d="M302 165l50-8v145l-50 6z" fill="#e5dcd5" stroke="#40cece"/>
      <path d="M303 172l48-6v22l-48 6zM303 195l48-6v101l-48 6z" fill="#e6ddd5" stroke="#5e5552" stroke-width="1.200"/>
      <path d="M319 170v125M335 168v124" stroke="#5e5552" stroke-width="1.600"/><path d="M303 194.500l48-6" stroke="#444" stroke-width="1.200"/>
      <path d="M305 174l11-1v17l-11 1zM322 172l11-1v17l-11 1zM338 170l11-1v17l-11 1zM305 198l11-1v95l-11 1zM322 196l11-1v95l-11 1zM338 194l11-1v95l-11 1z" fill="none" stroke="#b8aba1" stroke-width=".6"/>
      <path d="M303 298l46-6v7l-46 5z" fill="#fff"/><path d="M303 304l49-6v4l-49 6z" fill="#73e4ef"/><path d="M349 292h3v8l-3-2z" fill="#777"/>
      <path d="M301 165v8l51-7" fill="none" stroke="#3adb66"/>
      <path d="M361 237l56-7v57l-51 7-5-2z" fill="#b9fdfd" stroke="#66e8ec"/><path d="M366 239v55M412 232v52M361 289l51-6" stroke="#87efef"/>
      <path d="M361 149l49-8 7 2v9l-49 7-7-2z" fill="#9ef2eb" stroke="#5ae9e9"/>
      <path d="M361 156l7 2v80l-7-2z" fill="#777"/><path d="M368 158h12v76l-12 3z" fill="#fff"/><path d="M375 158l5-1v77l-5 1z" fill="#62a651"/><path d="M369 158v78l11-1v-9l-11 3" fill="#a5ec6d" stroke="#50d850"/><path d="M370 159h5v14h-5zM370 178h5v15h-5zM370 198h5v15h-5z" fill="#fff"/><path d="M369 175l8-1 3 2M369 195l8-1 3 2M369 215l8-1 3 2" fill="none" stroke="#777" stroke-width="2"/>
      <path d="M368 150l49-7v8l-49 7z" fill="#b46149" stroke="#733a2a" stroke-width=".7"/>
      <path d="M380 156l37-5v65l-37 5z" fill="#b8634a" stroke="#512c25"/><path d="M399 154v65" stroke="#442721" stroke-width="1.500"/><path d="M383 158l13-1v59l-13 2zM402 156l12-2v59l-12 2z" fill="#bd674d" stroke="#7d4032" stroke-width=".7"/>
      <path d="M380 222l37-5v12l-37 5z" fill="#fff" stroke="#777"/><path d="M412 218l5-1v12l-5-1z" fill="#653c34"/><path d="M380 233l37-4" stroke="#777" stroke-width="1.600"/><path d="M380 159l3-3" stroke="#d08" stroke-width="2"/><path d="M361 237l19-2 37-5V142" fill="none" stroke="#5edee4"/>
      <path d="M449 245l15-2v36l-15-4z" fill="#5d3129" stroke="#351a15"/><path d="M464 243l23-3v36l-23 3z" fill="#bd6249" stroke="#5b3025"/><path d="M468 246l16-2v29l-16 2z" fill="none" stroke="#8d4636" stroke-width=".7"/>
      <path d="M452 276v5M464 279v5M485 276v5" stroke="#a11440" stroke-width="2"/><path d="M423 240l49-7 16 4-50 9z" fill="#7b573e" stroke="#2d1d13" stroke-width=".8"/><path d="M423 241l15 5 50-8" fill="none" stroke="#2d1d13" stroke-width="1.300"/>
      <path d="M501 127l16 5v145l-16-4z" fill="#2d1d11" stroke="#160d06"/><path d="M517 132l54-7v145l-54 7z" fill="#4c311f" stroke="#1e1108"/>
      <path d="M518 139l53-7v22l-53 7zM518 165l53-7v107l-53 7z" fill="#543621" stroke="#1e1108" stroke-width="1.200"/><path d="M535 137v134M553 135v133" stroke="#1e1108" stroke-width="1.800"/><path d="M501 160l16 4 54-8" fill="none" stroke="#160d06" stroke-width="1.500"/>
      <path d="M520 142l12-2v17l-12 2zM538 139l12-1v17l-12 1zM555 137l12-1v17l-12 1zM520 168l12-2v101l-12 2zM538 166l12-2v101l-12 2zM555 163l12-1v100l-12 2z" fill="#5b3b24" stroke="#35200f" stroke-width=".7"/><path d="M508 128l9 3 54-7" fill="none" stroke="#2a5a2a" stroke-width=".8"/>
      <path d="M579 243l83-13 8 3-83 13z" fill="#9b5140" stroke="#4e2a22"/><path d="M579 243l8 3v13l-8-2z" fill="#4f2a25"/><path d="M587 246l83-13v14l-83 12z" fill="#a6543f" stroke="#57302a"/><path d="M607.500 243v13M628.500 240v13M649.500 237v13" stroke="#57302a"/><path d="M590 248l15-2v8l-15 2zM610 245l16-2v8l-16 2zM631 242l16-2v8l-16 2zM652 239l15-2v8l-15 2z" fill="#d4694b" stroke="#8b4635" stroke-width=".8"/>
      <path d="M682 232l20-5 11 5v10l-19 4-12-4z" fill="#a6513e" stroke="#54302a"/><path d="M682 232l12 3v11l-12-4z" fill="#57302a"/><path d="M694 236l19-4v10l-19 4z" fill="#b25b45" stroke="#57302a"/><path d="M697 238l13-2v4l-13 3z" fill="#d46c4f"/>
      <path d="M710 227l20-4 11 4v11l-19 4-12-5z" fill="#a6513e" stroke="#54302a"/><path d="M710 227l12 4v11l-12-5z" fill="#57302a"/><path d="M722 231l19-4v11l-19 4z" fill="#b25b45" stroke="#57302a"/><path d="M725 233l13-2v5l-13 2z" fill="#d46c4f"/>
      <g class="dl"><path d="M100 160v33M236 140v32M282 170v14M286 142v22M336 134v18M361 132v17M411 124v17M423 222v18M472 216v17M501 113v14M555 106v14M579 214v29M662 202v28M682 218v14M701 216v11M710 216v11M728 213v11"/></g>
      <g class="dl ends"><path d="M100 160l136-20"/><path d="M236 154l46 16"/><path d="M286 142l50-8"/><path d="M361 132l50-8"/><path d="M423 222l49-6"/><path d="M501 113l54-7"/><path d="M579 214l83-12"/><path d="M682 218l19-2"/><path d="M710 216l18-3"/></g>
      <g class="dt"><text x="168" y="147" transform="rotate(-7 168 147)">3300</text><text class="s" x="258" y="158" transform="rotate(15 258 158)">1700</text><text x="310" y="136" transform="rotate(-7 310 136)">1200</text><text x="385" y="126" transform="rotate(-7 385 126)">1200</text><text x="447" y="216" transform="rotate(-7 447 216)">1200</text><text x="527" y="107" transform="rotate(-7 527 107)">1300</text><text x="620" y="205" transform="rotate(-7 620 205)">1996</text><text x="691" y="214" transform="rotate(-7 691 214)">450</text><text x="718" y="211" transform="rotate(-7 718 211)">450</text></g>
    </svg>
    <div class="tabs"><button>Сет Багдат 3 ЛДСП(белый+ватан) <svg class="i6"><use href="#x"/></svg></button><button class="cur">КУХНЯ 5 М УГЛ <svg class="i6"><use href="#x"/></svg></button><button>кухня 3 м <svg class="i6"><use href="#x"/></svg></button><button>КУХНЯ 4 М УГЛ <svg class="i6"><use href="#x"/></svg></button>
      <div class="tnav"><svg><use href="#tl"/></svg><svg><use href="#tr"/></svg><i class="sep"></i><svg><use href="#dbu"/></svg></div></div>
  </section>
  <aside class="rp">
    <div class="cap"><svg><use href="#min"/></svg><svg><use href="#max"/></svg></div>
    <div class="cap"><svg><use href="#min"/></svg><svg><use href="#max"/></svg></div>
    <div class="list"><ol><li>1</li><li>1</li><li>1</li><li>1</li><li>1</li><li>1</li><li>1</li><li>1</li><li>1</li><li>1</li><li>1</li><li>1</li><li>1</li><li>1</li><li>1</li><li class="dim">1</li><li>1</li><li class="sel">1</li></ol><div class="sb"><svg><use href="#chu"/></svg><span></span><i></i><svg><use href="#chd"/></svg></div></div>
    <div class="cap"><svg><use href="#min"/></svg><svg><use href="#max"/></svg></div>
    <select aria-label="Материал"><option>М</option></select>
    <div class="props"><b>Пара.</b><span>На</span><span>Ар</span><span>Ко</span><span>Ма</span><span>За</span><span>Се</span><span>По</span><span>До</span><div class="hs"><svg><use href="#chl"/></svg><svg><use href="#chr"/></svg></div></div>
  </aside>
  <div class="vt right"><svg><use href="#sheet"/></svg><svg><use href="#srv"/></svg><svg><use href="#xml"/></svg><hr><svg><use href="#ga"/></svg><hr><svg><use href="#screw"/></svg><svg><use href="#screwa"/></svg><svg><use href="#screwx"/></svg><hr><svg><use href="#layp"/></svg><svg><use href="#laya"/></svg><svg><use href="#layx"/></svg><hr><svg><use href="#blk"/></svg><svg><use href="#gr"/></svg><hr><svg><use href="#slot"/></svg><svg><use href="#slota"/></svg><svg><use href="#slotx"/></svg></div>
</main>

<div class="help"><div><button aria-label="Справка"><svg><use href="#ques"/></svg></button></div></div>
<footer class="status"><div class="matl"><svg><use href="#mat"/></svg><svg class="small"><use href="#oak"/></svg><span>ЛДСП, 16 мм, Дуб</span></div>
  <div class="views"><button class="on" aria-label="Структура"><svg><use href="#tree"/></svg></button><button class="on" aria-label="Свойства"><svg><use href="#edit"/></svg></button><button class="on" aria-label="Фурнитура"><svg><use href="#cells"/></svg></button><button class="on" aria-label="История"><svg><use href="#clock"/></svg></button><button aria-label="Поиск"><svg><use href="#look"/></svg></button><button aria-label="Материалы"><svg><use href="#sets"/></svg></button><button class="on" aria-label="Библиотека"><svg><use href="#gold"/></svg></button></div>
</footer>
<div class="task"><button class="start" aria-label="Пуск"><svg><use href="#win"/></svg></button>
  <label class="search"><svg><use href="#mgl"/></svg><input type="text" aria-label="Поиск" placeholder="Чтобы начать поиск, введите здесь запрос"></label>
  <button class="app-b" aria-label="Edge"><svg><use href="#edgeb"/></svg></button><button class="app-b" aria-label="Проводник"><svg><use href="#expl"/></svg></button><button class="app-b act" aria-label="Базис"><svg><use href="#logo"/></svg></button><button class="app-b" aria-label="WhatsApp"><svg><use href="#wa"/></svg><span class="badge">18</span></button>
  <div class="tray"><svg><use href="#chu"/></svg><svg><use href="#t1"/></svg><svg><use href="#t2"/></svg><svg><use href="#t3"/></svg><svg><use href="#t4"/></svg><span>ҚАЗ</span><time>14:27<br>20.04.2026</time><svg class="note"><use href="#t5"/></svg></div>
</div>
</div>
</body>
</html>
```

FILE: styles.css
```css
* { box-sizing: border-box; }
body { margin: 0; background: #fff; color: #222; font: 7px/10px Roboto, "Noto Sans", sans-serif; }
button { border: 0; padding: 0; margin: 0; background: none; font: inherit; color: inherit; }
svg { flex: none; display: block; }
.defs { display: none; }
.app { display: flex; flex-direction: column; min-height: 100vh; }
.i9 { width: 10px; height: 10px; }
.i7 { width: 7px; height: 7px; }
.i6 { width: 5px; height: 5px; display: inline-block; }
.i5 { width: 4px; height: 4px; display: inline-block; }

.title { display: flex; align-items: center; height: 14px; gap: 2px; }
.title h1 { margin: 0; font-size: 7px; font-weight: 400; }
.winbtns { margin-left: auto; display: flex; gap: 20px; padding-right: 10px; color: #555; }
.menu { display: flex; align-items: center; height: 14px; gap: 9px; padding-left: 9px; border-bottom: 1px solid #eee; }
.menuright { margin-left: auto; display: flex; gap: 9px; padding-right: 2px; align-items: center; }
.menuright .bar { border-left: 1px solid #aaa; padding-left: 5px; }
.mdi { width: 6px; display: flex; }
.menuright .mdi + .mdi { margin-left: -3px; }

.tools { display: flex; height: 21px; border-bottom: 1px solid #e4e4e4; padding-left: 2px; }
.tools.second { height: 20px; border-bottom: 2px solid #ebebeb; }
.g { display: flex; align-items: center; border-left: 1px dotted #bbb; padding-left: 1px; }
.tools button { width: 18px; height: 18px; display: grid; place-items: center; flex: none; }
.tools button svg { width: 15px; height: 15px; }
.on { background: #cde8fb; }
.caret { width: 6px; height: 5px; }
.more { width: 5px; height: 6px; margin-left: auto; margin-right: 2px; align-self: flex-start; margin-top: 2px; }
.gap { width: 4px; }
.sep { width: 1px; height: 14px; background: #bbb; margin: 0 1px; flex: none; }
.g1 { width: 116px; }
.g2 { width: 254px; padding-left: 3px; }
.g3 { width: 32px; padding-left: 4px; }
.g4 { width: 198px; padding-left: 4px; }
.g5 { width: 12px; }
.g6 { flex: 1; gap: 3px; padding-left: 7px; font-size: 8px; }
.g7 { width: 157px; padding-left: 5px; }
select { appearance: none; border: 1px solid #aaa; border-radius: 0; background: #fff url("data:image/svg+xml,%3Csvg xmlns='http://www.w3.org/2000/svg' viewBox='0 0 8 8'%3E%3Cpath d='M1 2l3 4 3-4' fill='none' stroke='%23666'/%3E%3C/svg%3E") no-repeat right 2px center / 6px 6px; font: 8px/10px Roboto, sans-serif; width: 38px; height: 15px; padding: 0 2px; color: #222; }
.g6 select { flex: none; }
select:disabled { color: #888; border-color: #ccc; opacity: 1; }
.coords { width: 149px; padding-left: 5px; gap: 4px; border-right: 1px dotted #ccc; }
.coords label { width: 4px; }
.coords input { width: 38px; height: 14px; border: 1px solid #aaa; padding: 0 1px; font: inherit; color: #222; }
.h1 { flex: 1; border: 0; }
.h2 { width: 128px; padding-left: 8px; }
.h2 .sep { margin: 0 4px; }
.h3 { width: 46px; }
.h4 { width: 83px; padding-left: 3px; border-right: 1px dotted #bbb; }
.h5 { width: 156px; padding-left: 2px; }

.main { flex: 1; display: flex; min-height: 0; }
.vt { width: 20px; border: 1px solid #ddd; border-left: 0; border-top: 1px dotted #ccc; display: flex; flex-direction: column; align-items: center; padding: 5px 0 1px; gap: 2px; align-self: flex-start; }
.vt svg { width: 16px; height: 15px; }
.vt hr { width: 16px; height: 1px; margin: 1px 0; border: 0; background: #bbb; }
.lp { width: 28px; display: flex; flex-direction: column; border-right: 1px solid #ddd; padding-left: 1px; }
.cap { height: 13px; background: #eef2f9; border-bottom: 1px solid #ddd; display: flex; align-items: center; gap: 3px; padding-left: 3px; color: #2f5ca8; }
.cap svg { width: 6px; height: 6px; }
.file { height: 13px; border-bottom: 1px solid #e2e2e2; text-align: right; padding-right: 3px; flex: none; }
.fi { display: flex; flex-direction: column; gap: 3px; padding: 4px 0 3px 4px; }
.fi svg { width: 12px; height: 12px; }
.fi hr { width: 1px; height: 1px; margin: 0; border: 0; background: #aaa; }
.preview { flex: 1; border: 1px solid #888; border-bottom-width: 2px; margin-left: 1px; }
.under { height: 33px; border: 1px solid #ddd; margin: 0 0 2px 1px; }
.work { flex: 1; min-width: 0; display: flex; flex-direction: column; border-left: 4px solid #efefef; }
.scene { width: 100%; flex: 1; min-height: 0; }
.dl { fill: none; stroke: #6fa3a6; stroke-width: 1; }
.ends path { marker-start: url(#a); marker-end: url(#a); }
.dt text { font: italic 300 11px Roboto, sans-serif; fill: #4d7f83; text-anchor: middle; }
.dt .s { font-size: 9px; }
.tabs { display: flex; height: 16px; border-top: 3px solid #eee; border-bottom: 1px solid #ddd; margin-bottom: 2px; }
.tabs > button { background: #eee; padding: 0 5px 0 3px; display: flex; align-items: center; gap: 6px; white-space: nowrap; }
.tabs > .cur { background: #fff; }
.tnav { margin-left: auto; display: flex; align-items: center; gap: 4px; border-left: 1px solid #ddd; padding: 0 5px 0 3px; }
.tnav svg { width: 6px; height: 6px; }
.rp { width: 26px; margin-left: 2px; display: flex; flex-direction: column; overflow: hidden; border-left: 1px dotted #ccc; padding-left: 2px; }
.rp .cap { flex: none; }
.list { display: flex; border: 1px solid #999; height: 194px; flex: none; margin-bottom: 1px; }
ol { list-style: none; margin: 0; padding: 3px 0 0; flex: 1; text-align: right; font-family: "DejaVu Sans Mono", monospace; }
ol li { height: 11px; line-height: 11px; padding-right: 1px; }
ol li:nth-child(even) { height: 10px; line-height: 10px; }
.dim { color: #ccc; }
.sel { background: #cfe0ef; }
.sb { width: 11px; background: #eee; display: flex; flex-direction: column; align-items: center; }
.sb svg { width: 6px; height: 10px; color: #333; }
.sb span { height: 59px; }
.sb i { flex: 1; width: 100%; background: #c9c9c9; }
.rp select { width: 20px; height: 13px; background-color: #e8e8e8; margin: 2px 0 1px 1px; padding: 0 1px; flex: none; }
.props { flex: 1; border: 1px solid #999; margin-bottom: 2px; display: flex; flex-direction: column; white-space: nowrap; overflow: hidden; line-height: 13px; padding-left: 2px; }
.props b { font-weight: 400; }
.props span { padding-left: 10px; }
.hs { margin: auto 0 2px; display: flex; gap: 5px; }
.hs svg { width: 6px; height: 7px; }
.right { border-right: 0; }

.help { height: 20px; display: flex; padding-left: 3px; }
.help div { width: 151px; border: 1px solid #ddd; border-top: 0; border-left-style: dotted; padding: 3px 5px; }
.help svg { width: 13px; height: 13px; }
.status { height: 21px; display: flex; align-items: center; font-size: 8px; justify-content: space-between; }
.matl { display: flex; align-items: center; gap: 6px; padding-left: 7px; width: 171px; border-right: 1px solid #ddd; height: 18px; }
.matl svg { width: 14px; height: 14px; }
.matl .small { width: 12px; height: 12px; }
.matl span { margin-left: -2px; }
.views { display: flex; margin-right: 209px; }
.views button { width: 18px; height: 18px; display: grid; place-items: center; border-right: 1px solid #e8f4fc; }
.views svg { width: 15px; height: 15px; }
.task { height: 23px; background: #1e1e1e; display: flex; color: #eee; }
.start { width: 28px; display: grid; place-items: center; }
.task svg { width: 14px; height: 14px; }
.search { width: 203px; background: #2e2e2e; display: flex; align-items: center; gap: 5px; padding-left: 6px; }
.search svg { width: 12px; height: 12px; }
.search input { flex: 1; min-width: 0; border: 0; padding: 0; background: none; font: 8px/12px "Open Sans", sans-serif; color: #fff; }
.search input::placeholder { color: #bbb; opacity: 1; }
.app-b { width: 27px; display: grid; place-items: center; position: relative; background: #383838; border-right: 1px solid #222; }
.act { background: #6a6a6a; }
.badge { position: absolute; right: 5px; bottom: 4px; background: #444; border-radius: 4px; font-size: 5px; line-height: 7px; padding: 0 1px; color: #fff; }
.tray { margin-left: auto; display: flex; align-items: center; gap: 5px; padding-right: 18px; font: 7px/10px "Open Sans", sans-serif; }
.task .tray svg { width: 9px; height: 9px; }
.tray time { text-align: center; padding: 0 5px 0 2px; }
.task .tray .note { width: 11px; height: 11px; }
```
